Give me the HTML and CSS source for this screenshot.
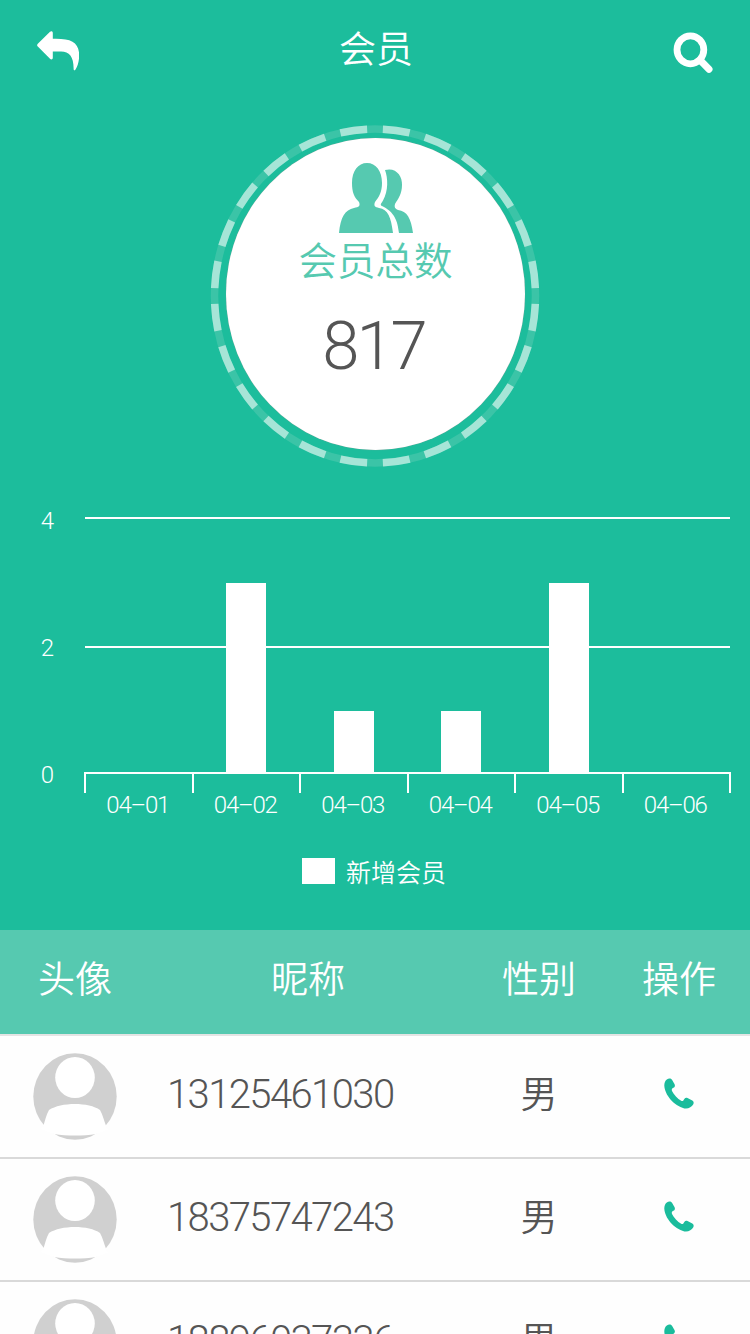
FILE: index.html
```html
<!DOCTYPE html>
<html lang="zh-CN">
<head>
  <meta charset="UTF-8" />
  <meta name="viewport" content="width=device-width, initial-scale=1" />
  <title>会员</title>
  <link rel="stylesheet" href="styles.css">
</head>
<body>
  <!-- Shared icons -->
  <svg class="sprite" width="0" height="0">
    <symbol id="avatar" viewBox="0 0 84 87">
      <ellipse cx="42" cy="43.5" rx="41.7" ry="43.3" fill="#d0d0d0" />
      <ellipse cx="42" cy="24.5" rx="19.8" ry="20.5" fill="#fff" />
      <path d="M10 74 C12 68 13 62 16 57 C28 49 56 49 67 57 C70 62 71 68 73.5 74 L76 76 L63 81 C50 83 34 83 21 81 L8 76 Z" fill="#fff" />
    </symbol>
    <symbol id="phone" viewBox="0 0 30 31">
      <path d="M2.8 1.6 C4.5 .2 6.8 .1 8 1.8 L10.6 6.2 C11.2 7.5 10.9 8.7 10 9.6 C8.2 10.3 7.3 11.2 8 13 C9.8 16.6 13.6 20.8 17.2 22.8 C18.8 23.5 19.5 22.6 20.3 21 C21 19.9 22.3 19.6 23.5 20.1 L28.3 22.6 C29.8 23.4 30 25 29.3 26.3 C27.6 29.4 24.2 31 20.4 30.4 C9.9 28 .6 16.8 .3 7.6 C.3 5 1.2 2.9 2.8 1.6 Z" fill="#1abc9c" />
    </symbol>
  </svg>

  <div class="top">
    <header>
      <svg class="back" viewBox="0 0 42 40" width="42" height="40">
        <path d="M13 .8 C14.4 -.3 15.8 .3 15.8 2 V7.8 C34 7.3 41.8 11 42.2 24 C42.2 30 40.8 35 38.5 38.5 C37.7 39.8 36.7 39.6 36.6 38 C36.8 26 32.5 20.4 24 20.4 H15.8 V26.8 C15.8 28.5 14.2 29 13 27.8 L.8 15.6 C-.1 14.6 -.1 13.8 .8 12.8 Z" fill="#fff" />
      </svg>
      <h1>会员</h1>
      <svg class="search" viewBox="0 0 40 42" width="40" height="42">
        <ellipse cx="17.4" cy="18.8" rx="13.4" ry="14" fill="none" stroke="#fff" stroke-width="6.8" />
        <path d="M27 29 L36 38.2" stroke="#fff" stroke-width="7" stroke-linecap="round" />
      </svg>
    </header>

    <section class="total">
      <svg class="ring" viewBox="0 0 330 342" width="330" height="342">
        <ellipse class="ring-base" cx="165" cy="171" rx="160.5" ry="167" />
        <ellipse class="ring-dash" cx="165" cy="171" rx="160.5" ry="167" pathLength="24" />
      </svg>
      <div class="total-inner">
        <svg viewBox="0 0 74 70" width="74" height="70">
          <path d="M28 0 C37 0 43 8 43 20 C43 29 40 34 36 39 C34.5 43 36 44 40 45 C49 46.5 52 54 54 70 H0 C1.5 54 6 47 15 45 C20 44 21.5 43 20 39 C15 34 13 29 13 20 C13 8 19 0 28 0 Z" />
          <path d="M46 7 C57 4 63.5 13 63 22 C63 31 59 36 56 41 C55 44 56 46 59 47 C68 48 72 55 74 70 H60 C58.5 58 56 49 42 42.5 C41 41 43 39.5 44 37.5 C49.5 28 49 15 46 7 Z" />
        </svg>
        <h2>会员总数</h2>
        <p>817</p>
      </div>
    </section>

    <section class="chart">
      <div class="y-axis">
        <span>4</span>
        <span>2</span>
        <span>0</span>
      </div>
      <div class="plot">
        <div class="lines">
          <i></i>
          <i></i>
        </div>
        <div class="bars">
          <div class="bar" style="height: 0%"></div>
          <div class="bar" style="height: 74%"></div>
          <div class="bar" style="height: 24%"></div>
          <div class="bar" style="height: 24%"></div>
          <div class="bar" style="height: 74%"></div>
          <div class="bar" style="height: 0%"></div>
        </div>
        <div class="x-axis">
          <span>04–01</span>
          <span>04–02</span>
          <span>04–03</span>
          <span>04–04</span>
          <span>04–05</span>
          <span>04–06</span>
        </div>
      </div>
    </section>

    <div class="legend"><i></i>新增会员</div>
  </div>

  <main class="members">
    <div class="row head">
      <span>头像</span>
      <span>昵称</span>
      <span>性别</span>
      <span>操作</span>
    </div>
    <div class="row">
      <svg class="avatar"><use href="#avatar" /></svg>
      <span class="name">13125461030</span>
      <span class="sex">男</span>
      <svg class="phone"><use href="#phone" /></svg>
    </div>
    <div class="row">
      <svg class="avatar"><use href="#avatar" /></svg>
      <span class="name">18375747243</span>
      <span class="sex">男</span>
      <svg class="phone"><use href="#phone" /></svg>
    </div>
    <div class="row">
      <svg class="avatar"><use href="#avatar" /></svg>
      <span class="name">18896037336</span>
      <span class="sex">男</span>
      <svg class="phone"><use href="#phone" /></svg>
    </div>
  </main>
</body>
</html>
```

FILE: styles.css
```css
* {
  box-sizing: border-box;
}
body {
  margin: 0;
  width: 750px;
  height: 1334px;
  overflow: hidden;
  background: #fefefe;
  color: #555;
  font-family: Roboto, "Noto Sans CJK SC", sans-serif;
  font-weight: 300;
}
.sprite {
  display: block;
}
h1, h2, p {
  margin: 0;
  font-weight: 300;
}
h1, h2, .legend, .head, .sex {
  font-family: "Noto Sans CJK SC", sans-serif;
  font-weight: 350;
}
.top {
  height: 930px;
  background: #1cbd9c;
  color: #fff;
}

/* Header */
header {
  display: flex;
  justify-content: space-between;
  height: 125px;
  padding: 31px 37px 0;
}
h1 {
  font-size: 37px;
  line-height: 33px;
}

/* Total members circle */
.total {
  display: grid;
  justify-content: center;
  height: 342px;
}
.ring, .total-inner {
  grid-area: 1 / 1;
}
.ring ellipse {
  fill: none;
  stroke-width: 7.5px;
}
.ring-base {
  stroke: #3bc4a7;
}
.ring .ring-dash {
  stroke: #a6e5d7;
  stroke-dasharray: 0.63 0.37;
  stroke-dashoffset: -0.185;
}
.total-inner {
  display: flex;
  flex-direction: column;
  align-items: center;
  width: 299px;
  height: 312px;
  margin: 13px 15px 17px 16px;
  padding-top: 25px;
  border-radius: 50%;
  background: #fff;
  box-shadow: 0 0 1px #999;
}
.total-inner svg {
  fill: #56c9b0;
}
h2 {
  margin-top: 2px;
  color: #56c9b0;
  font-size: 38.5px;
  line-height: 46px;
}
.total-inner p {
  margin-top: 26px;
  padding-right: 4px;
  color: #555;
  font-size: 67px;
  line-height: 78px;
  letter-spacing: -3px;
}

/* Chart */
.chart {
  display: flex;
  height: 341px;
  padding-top: 50px;
  font-size: 24px;
}
.y-axis {
  display: flex;
  flex-direction: column;
  justify-content: space-between;
  align-items: center;
  width: 84px;
  height: 282px;
  margin-top: -10px;
  padding-right: 12px;
  padding-left: 23px;
}
.plot {
  display: grid;
  grid-template-rows: 255px auto;
  width: 647px;
}
.lines, .bars {
  grid-area: 1 / 1;
}
.lines {
  padding: 0 1px;
}
.lines i {
  display: block;
  height: 129px;
  border-top: 2px solid #fff;
}
.bars {
  display: flex;
  justify-content: space-around;
  align-items: flex-end;
}
.bar {
  width: 40px;
  background: #fff;
}
.x-axis {
  display: flex;
  height: 21px;
  border: 2px solid #fff;
  border-bottom: 0;
}
.x-axis span {
  flex: 1;
  padding-top: 17px;
  padding-right: 2px;
  line-height: 28px;
  text-align: center;
  letter-spacing: -1.2px;
}
.x-axis span + span {
  border-left: 2px solid #fff;
  height: 19px;
}
.legend {
  display: flex;
  align-items: center;
  height: 26px;
  margin-top: 50px;
  padding-left: 302px;
  gap: 11px;
  font-size: 25px;
}
.legend i {
  width: 33px;
  height: 26px;
  background: #fff;
}

/* Member list */
.row {
  display: grid;
  grid-template-columns: 150px 316px 146px 134px;
  height: 123px;
  padding-top: 17px;
  border-bottom: 2px solid #d9d9d9;
  font-size: 37px;
  line-height: 78px;
  justify-items: center;
}
.head {
  height: 106px;
  padding-top: 8px;
  border-bottom-color: #e4e4e4;
  background: #56c9b0;
  color: #fff;
}
.avatar {
  width: 84px;
  height: 87px;
}
.name {
  justify-self: start;
  padding-left: 17px;
  font-size: 40px;
  line-height: 84px;
  letter-spacing: -1.6px;
}
.phone {
  width: 30px;
  height: 31px;
  margin-top: 25px;
}
```
